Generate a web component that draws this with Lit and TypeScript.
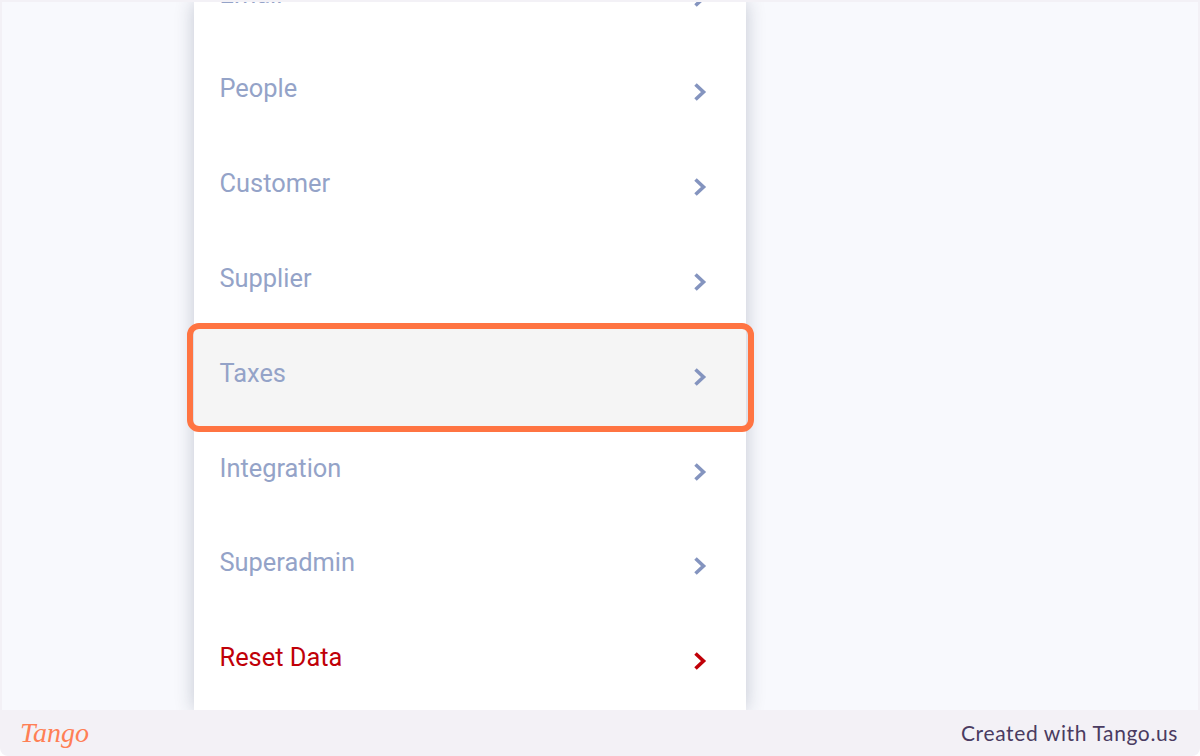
import { LitElement, html, css } from "lit";
import { customElement } from "lit/decorators.js";

const ITEMS = ["Email", "People", "Customer", "Supplier", "Taxes", "Integration", "Superadmin"];

@customElement("app-root")
export class AppRoot extends LitElement {
  static styles = css`
    :host { display: block; width: 1200px; height: 756px; background: #fff; overflow: hidden; }
    .frame { position: relative; width: 1200px; height: 756px; background: #f3f1f6; border-radius: 0 0 8px 8px; display: flex; flex-direction: column; overflow: hidden; }
    .screen { position: relative; flex: 1; min-height: 0; margin: 2px 2px 0; background: #f8f9fd; overflow: hidden; }
    .card { width: 552px; height: 100%; margin-left: 192px; background: #fff; box-shadow: 0 0 18px rgba(30, 40, 70, 0.24); overflow: hidden; }
    .list { margin-top: -54.8px; }
    .row { height: 94.8px; display: flex; align-items: center; justify-content: space-between; padding: 0 38px 0 25.5px; font: 400 25.4px/30px Roboto, sans-serif; color: #94a3c8; }
    .row.on { background: #f5f5f5; box-shadow: 0 5px 0 #f5f5f5; }
    .row.danger { color: #c00008; }
    .label { position: relative; top: -1px; }
    .row svg { width: 16px; height: 20px; display: block; position: relative; top: 3px; color: #8494bf; }
    .row.danger svg { color: #c00008; }
    .mark { position: absolute; left: 187px; top: 323px; width: 567px; height: 109px; box-sizing: border-box; border: 6px solid #ff7442; border-radius: 12px; }
    .foot { height: 46px; flex: none; display: flex; align-items: center; justify-content: space-between; padding: 0 22px 0 20px; }
    .logo { font: italic 400 28px/46px "Liberation Serif", serif; color: #ff7f55; }
    .credit { font: 400 21px/46px Lato, sans-serif; color: #4a3b61; letter-spacing: 0.62px; }
  `;
  chev() {
    return html`<svg viewBox="0 0 16 20"><path d="M3.5 2.5 L11.5 10 L3.5 17.5" fill="none" stroke="currentColor" stroke-width="3.6" stroke-linejoin="miter"/></svg>`;
  }
  render() {
    return html`<div class="frame">
      <div class="screen">
        <div class="card"><div class="list">
          ${ITEMS.map((t) => html`<div class="row ${t === "Taxes" ? "on" : ""}"><span class="label">${t}</span>${this.chev()}</div>`)}
          <div class="row danger"><span class="label">Reset Data</span>${this.chev()}</div>
        </div></div>
      </div>
      <div class="mark"></div>
      <div class="foot"><span class="logo">Tango</span><span class="credit">Created with Tango.us</span></div>
    </div>`;
  }
}
